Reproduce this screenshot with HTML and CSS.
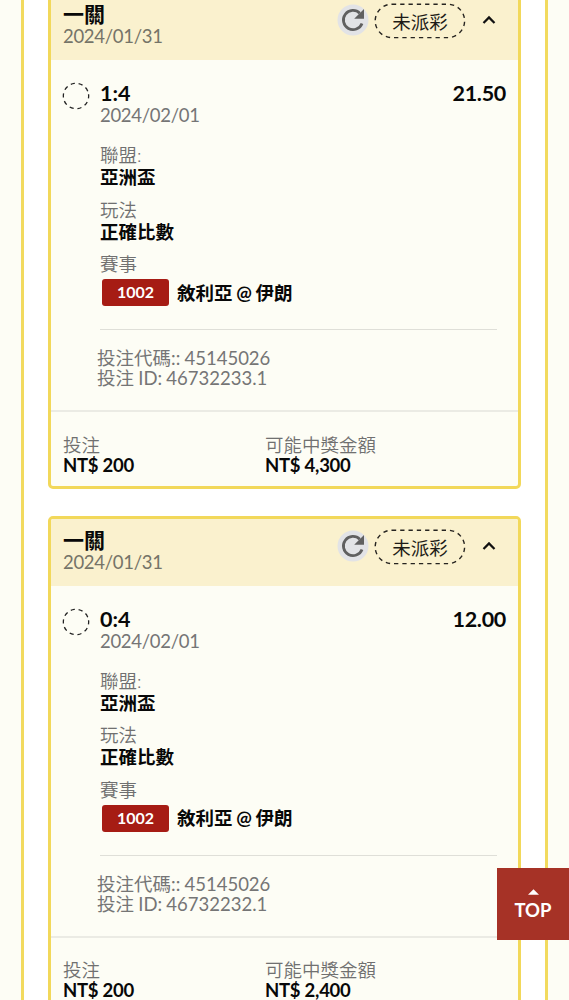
FILE: index.html
```html
<!DOCTYPE html>
<html lang="zh-Hant">
<head>
<meta charset="utf-8">
<title>投注紀錄</title>
<link rel="stylesheet" href="styles.css">
</head>
<body>
<main class="panel">
  <article class="card">
    <header class="card-head">
      <div class="head-text"><h2 class="title">一關</h2><div class="date">2024/01/31</div></div>
      <svg class="refresh" viewBox="0 0 32 32"><circle cx="16" cy="16" r="15.5" fill="#e2e3e6"/><path d="M25 19.4A9.6 9.6 0 1 1 22.8 9.2" fill="none" stroke="#606060" stroke-width="2.8"/><path d="M27 5V14.8H17.2Z" fill="#606060"/></svg>
      <svg class="status" viewBox="0 0 92 36"><rect x="1.2" y="1.2" width="89.4" height="33.4" rx="16.7" fill="none" stroke="#262420" stroke-width="1.4" stroke-dasharray="4.3 4"/><text class="status-text" x="46" y="25.5" text-anchor="middle">未派彩</text></svg>
      <svg class="chevron" viewBox="0 0 14 10"><path d="M1.5 8L7 2.4L12.5 8" fill="none" stroke="#111" stroke-width="2.2"/></svg>
    </header>
    <section class="bet">
      <svg class="ring" viewBox="0 0 28 28"><circle cx="14" cy="14" r="12.7" fill="none" stroke="#222" stroke-width="1.3" stroke-dasharray="4.2 3.78" transform="rotate(-8 14 14)"/></svg>
      <div class="detail">
        <div class="pick"><span class="score">1:4</span><span class="odds">21.50</span></div>
        <div class="date pick-date">2024/02/01</div>
        <dl class="facts">
          <dt class="label">聯盟:</dt><dd class="value">亞洲盃</dd>
          <dt class="label">玩法</dt><dd class="value">正確比數</dd>
          <dt class="label">賽事</dt><dd class="match"><span class="code">1002</span><span class="value teams">敘利亞 @ 伊朗</span></dd>
        </dl>
        <div class="ids"><div class="id-line">投注代碼:: 45145026</div><div class="id-line">投注 ID: 46732233.1</div></div>
      </div>
    </section>
    <footer class="totals">
      <div><div class="label">投注</div><div class="amount">NT$ 200</div></div>
      <div><div class="label">可能中獎金額</div><div class="amount">NT$ 4,300</div></div>
    </footer>
  </article>
  <article class="card">
    <header class="card-head">
      <div class="head-text"><h2 class="title">一關</h2><div class="date">2024/01/31</div></div>
      <svg class="refresh" viewBox="0 0 32 32"><circle cx="16" cy="16" r="15.5" fill="#e2e3e6"/><path d="M25 19.4A9.6 9.6 0 1 1 22.8 9.2" fill="none" stroke="#606060" stroke-width="2.8"/><path d="M27 5V14.8H17.2Z" fill="#606060"/></svg>
      <svg class="status" viewBox="0 0 92 36"><rect x="1.2" y="1.2" width="89.4" height="33.4" rx="16.7" fill="none" stroke="#262420" stroke-width="1.4" stroke-dasharray="4.3 4"/><text class="status-text" x="46" y="25.5" text-anchor="middle">未派彩</text></svg>
      <svg class="chevron" viewBox="0 0 14 10"><path d="M1.5 8L7 2.4L12.5 8" fill="none" stroke="#111" stroke-width="2.2"/></svg>
    </header>
    <section class="bet">
      <svg class="ring" viewBox="0 0 28 28"><circle cx="14" cy="14" r="12.7" fill="none" stroke="#222" stroke-width="1.3" stroke-dasharray="4.2 3.78" transform="rotate(-8 14 14)"/></svg>
      <div class="detail">
        <div class="pick"><span class="score">0:4</span><span class="odds">12.00</span></div>
        <div class="date pick-date">2024/02/01</div>
        <dl class="facts">
          <dt class="label">聯盟:</dt><dd class="value">亞洲盃</dd>
          <dt class="label">玩法</dt><dd class="value">正確比數</dd>
          <dt class="label">賽事</dt><dd class="match"><span class="code">1002</span><span class="value teams">敘利亞 @ 伊朗</span></dd>
        </dl>
        <div class="ids"><div class="id-line">投注代碼:: 45145026</div><div class="id-line">投注 ID: 46732232.1</div></div>
      </div>
    </section>
    <footer class="totals">
      <div><div class="label">投注</div><div class="amount">NT$ 200</div></div>
      <div><div class="label">可能中獎金額</div><div class="amount">NT$ 2,400</div></div>
    </footer>
  </article>
</main>
<a class="to-top"><svg class="to-top-arrow" viewBox="0 0 12 6"><path d="M6 0L12 6H0Z" fill="#fff"/></svg><span>TOP</span></a>
</body>
</html>
```

FILE: styles.css
```css
* { box-sizing: border-box; }
body {
  margin: 0;
  height: 1000px;
  overflow: hidden;
  padding: 0 21px;
  background: #fdfdf5;
  color: #080808;
  font-family: Lato, "Noto Sans CJK TC", sans-serif;
  font-size: 18.5px;
}
svg { display: block; flex: none; }
.panel {
  display: flow-root;
  height: 1000px;
  overflow: hidden;
  border: solid #f2da5e;
  border-width: 0 3px;
  background: #fff;
  padding: 0 24px;
}
.card {
  height: 499px;
  margin: -10px 0 36.5px;
  border: 3px solid #f2d85a;
  border-radius: 5px;
  background: #fdfdf5;
  overflow: hidden;
}
.card-head {
  height: 67px;
  display: flex;
  align-items: flex-start;
  padding: 9px 22px 0 12px;
  background: #faf1ce;
}
.head-text { flex: 1; }
.title { margin: 0; font-size: 21px; line-height: 23px; font-weight: 700; }
.date { color: #757468; font-size: 18.5px; line-height: 22px; letter-spacing: -0.3px; }
.refresh { width: 32px; height: 32px; margin-top: 2px; }
.status { width: 92px; height: 36px; margin: 1px 0 0 5px; }
.status-text { font-size: 18.5px; font-weight: 400; fill: #1d1b17; }
.chevron { width: 14px; height: 10px; margin: 13px 0 0 16px; }
.bet { height: 350px; padding: 22px 12px 0 11px; display: flex; gap: 10px; }
.ring { width: 28px; height: 28px; }
.detail { flex: 1; }
.pick { display: flex; justify-content: space-between; font-size: 21.5px; line-height: 22px; font-weight: 700; }
.odds { letter-spacing: -0.3px; }
.pick-date { color: #757575; }
.facts { margin: 18px 0 0; }
.label { color: #707070; font-weight: 350; line-height: 22px; }
.value { margin: 0; font-weight: 700; line-height: 22px; }
dd.value { margin-bottom: 10.5px; }
.match { margin: 4px 0 0 2px; display: flex; align-items: center; gap: 8px; }
.teams { word-spacing: -0.8px; }
.code {
  width: 67px;
  height: 27px;
  border-radius: 3px;
  background: #a61c14;
  color: #fff;
  text-align: center;
  font-size: 16px;
  line-height: 26px;
  font-weight: 700;
}
.ids { margin: 23px 9px 0 0; padding-top: 18px; border-top: 1px solid #dfdfd8; }
.id-line { margin-left: -3px; color: #757575; line-height: 20px; word-spacing: -0.5px; }
.totals {
  border-top: 2px solid #ebebe4;
  padding: 22.5px 12px 0;
  display: grid;
  grid-template-columns: 202px 1fr;
}
.totals .label, .amount { line-height: 20px; }
.amount { font-weight: 700; letter-spacing: -0.25px; }
.to-top {
  position: fixed;
  top: 868px;
  right: 0;
  width: 72px;
  height: 72px;
  padding-top: 21px;
  display: flex;
  flex-direction: column;
  align-items: center;
  gap: 4px;
  background: #a63226;
  color: #fff;
  font-size: 18.5px;
  line-height: 22px;
  font-weight: 700;
}
.to-top-arrow { width: 11px; height: 6px; }
```
